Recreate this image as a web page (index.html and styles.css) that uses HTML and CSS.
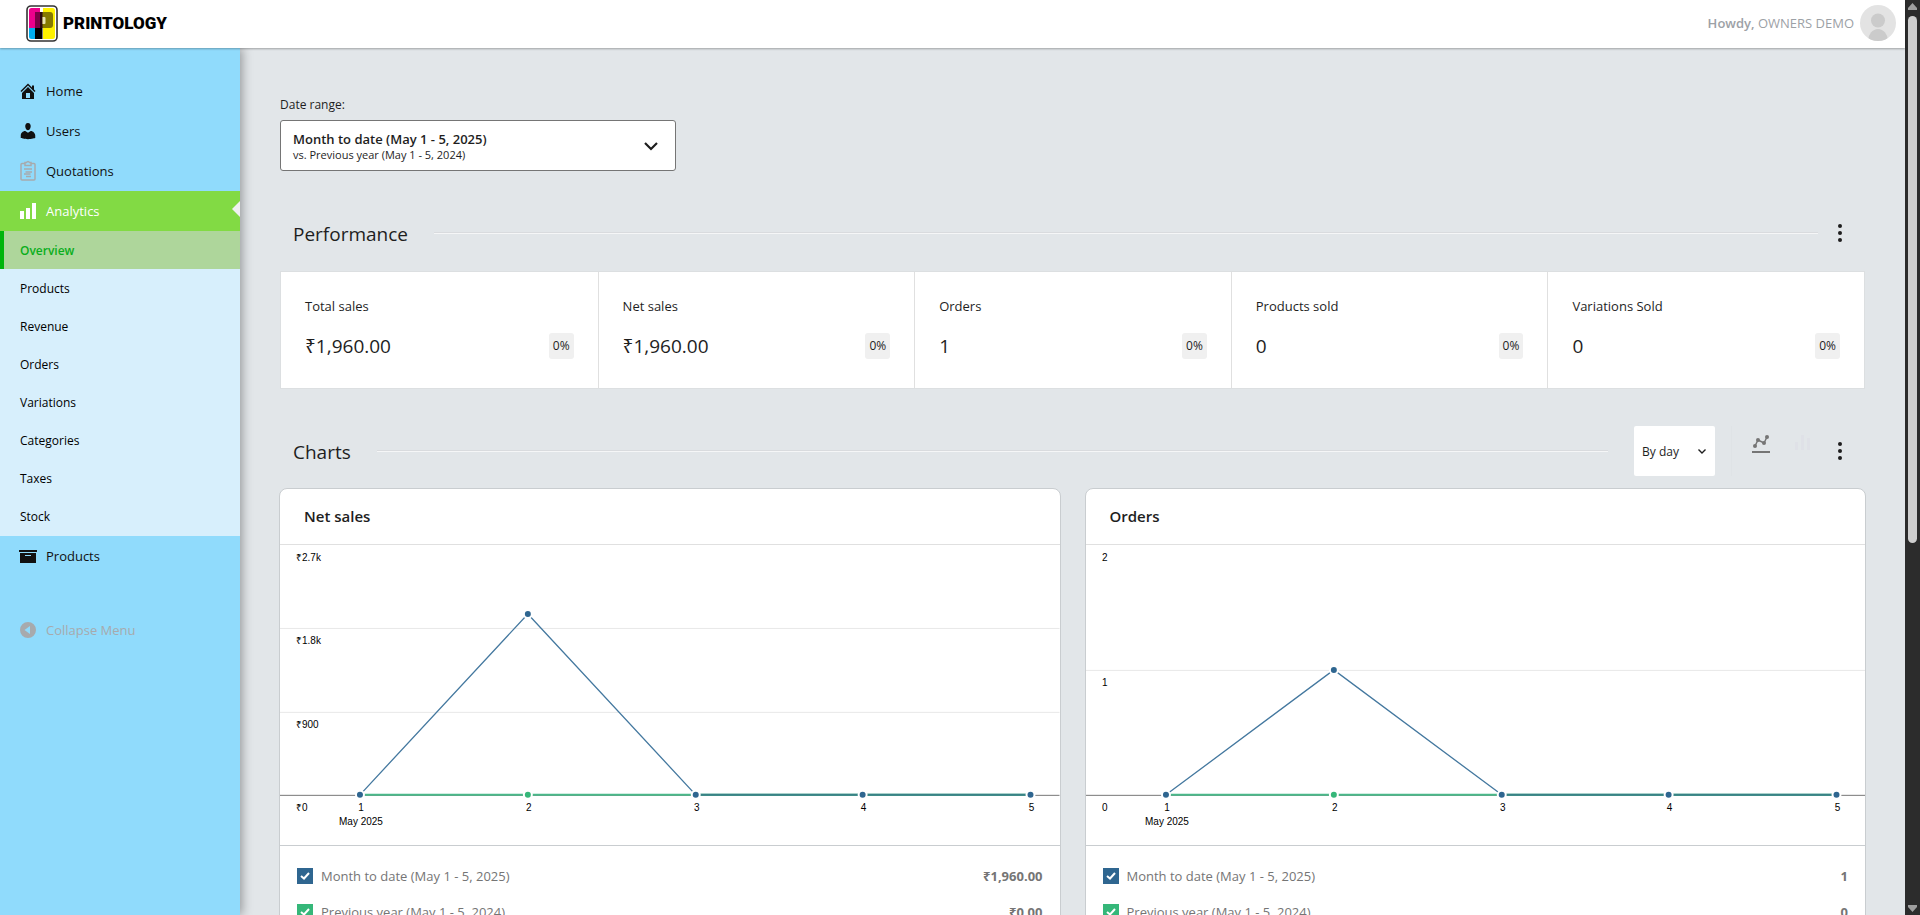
FILE: index.html
```html
<!DOCTYPE html>
<html lang="en">
<head>
<meta charset="utf-8">
<title>Analytics Overview</title>
<link rel="stylesheet" href="styles.css">
</head>
<body>
<div class="window">
  <div class="app">
    <header class="topbar">
      <a class="brand" href="#">
        <svg class="brand-mark" width="32" height="37" viewBox="0 0 32 37" aria-hidden="true">
          <rect x="1" y="1" width="30" height="35" rx="4" fill="#fff" stroke="#333" stroke-width="1.6"/>
          <path d="M5.500 3H14v20H3V5.500A2.500 2.500 0 0 1 5.500 3z" fill="#ec008c"/>
          <path d="M3 23h9v11H5.500A2.500 2.500 0 0 1 3 31.500z" fill="#00aeef"/>
          <path d="M17 3h9.500A2.500 2.500 0 0 1 29 5.500v26a2.500 2.500 0 0 1-2.500 2.500H17z" fill="#fff200"/>
          <path d="M9 7h7v16H9z" fill="#7a0046"/>
          <path d="M16 7h8q3 0 3 3v10q0 3-3 3h-8z" fill="#857a00"/>
          <path d="M9 23h7.500v11H9z" fill="#000"/>
          <path d="M14 7h2.500v16H14z" fill="#2a0a10"/>
          <path d="M16.500 12h2q1 0 1 1v5q0 1-1 1h-2z" fill="#e8e4b0"/>
        </svg>
        <span class="brand-name">PRINTOLOGY</span>
      </a>
      <a class="account" href="#"><span><b>Howdy,</b> OWNERS DEMO</span>
        <svg width="36" height="36" viewBox="0 0 36 36" aria-hidden="true"><defs><clipPath id="av"><circle cx="18" cy="18" r="18"/></clipPath></defs><g clip-path="url(#av)"><rect width="36" height="36" fill="#e3e3e3"/><circle cx="18" cy="15.500" r="7" fill="#cbcbcb"/><ellipse cx="18" cy="36" rx="10" ry="12" fill="#cbcbcb"/></g></svg>
      </a>
    </header>
    <div class="body">
      <nav class="sidebar">
        <a class="item" href="#"><svg viewBox="0 0 20 20" aria-hidden="true"><path d="M16 8.500l1.530 1.530-1.060 1.060L10 4.600l-6.470 6.490-1.060-1.060L10 2.500l4 4v-2h2v4zm-6-2.460l6 5.990V18H4v-5.970zM12 17v-5H8v5h4z"/></svg>Home</a>
        <a class="item" href="#"><svg viewBox="0 0 20 20" aria-hidden="true"><path d="M10 9.250c-2.270 0-2.730-3.440-2.730-3.440C7 4.020 7.820 2 9.970 2c2.160 0 2.980 2.020 2.710 3.810 0 0-.410 3.440-2.680 3.440zm0 2.570L12.720 10c2.390 0 4.520 2.330 4.520 4.530v2.490s-3.650 1.130-7.240 1.130c-3.650 0-7.240-1.130-7.240-1.130v-2.490c0-2.250 1.940-4.480 4.470-4.480z"/></svg>Users</a>
        <a class="item item-quote" href="#"><svg viewBox="0 0 20 20" aria-hidden="true"><path d="M6.500 2.500H4Q3 2.500 3 3.500V18q0 1 1 1h12q1 0 1-1V3.500q0-1-1-1h-2.500M7 1.500h1.500Q9 .4 10 .4t1.500 1.100H13V4.500H7zM6 8h8M7.500 11H14M6 13h6.500M8 15.500h5" fill="none" stroke="currentColor" stroke-width="1.500"/></svg>Quotations</a>
        <a class="item item-active" href="#"><svg viewBox="0 0 20 20" aria-hidden="true"><path d="M18 18V2h-4v16h4zm-6 0V7H8v11h4zm-6 0v-8H2v8h4z"/></svg>Analytics</a>
        <div class="submenu">
          <a class="current" href="#">Overview</a>
          <a href="#">Products</a>
          <a href="#">Revenue</a>
          <a href="#">Orders</a>
          <a href="#">Variations</a>
          <a href="#">Categories</a>
          <a href="#">Taxes</a>
          <a href="#">Stock</a>
        </div>
        <a class="item" href="#"><svg viewBox="0 0 20 20" aria-hidden="true"><path d="M19 4v2H1V4h18zM2 7h16v10H2V7zm11 3V9H7v1h6z"/></svg>Products</a>
        <button class="item collapse" type="button"><svg viewBox="0 0 20 20" aria-hidden="true"><path fill-rule="evenodd" d="M10 2a8 8 0 1 0 0 16 8 8 0 0 0 0-16zM12 6v8L6.500 10z"/></svg>Collapse Menu</button>
      </nav>
      <main class="content">
        <div class="range-label" id="range-label">Date range:</div>
        <button class="range" type="button" aria-describedby="range-label">
          <span class="range-text"><strong>Month to date (May 1 - 5, 2025)</strong><span>vs. Previous year (May 1 - 5, 2024)</span></span>
          <svg width="14" height="9" viewBox="0 0 14 9" aria-hidden="true"><path d="M1 1l6 6 6-6" fill="none" stroke="#1e1e1e" stroke-width="2.200"/></svg>
        </button>

        <div class="section-head">
          <h2>Performance</h2><hr>
          <button class="dots" type="button" aria-label="Performance options"><svg width="4" height="18" viewBox="0 0 4 18"><circle cx="2" cy="2" r="2"/><circle cx="2" cy="9" r="2"/><circle cx="2" cy="16" r="2"/></svg></button>
        </div>
        <div class="tiles">
          <a class="tile" href="#"><span>Total sales</span><span class="tile-row"><b>₹1,960.00</b><i>0%</i></span></a>
          <a class="tile" href="#"><span>Net sales</span><span class="tile-row"><b>₹1,960.00</b><i>0%</i></span></a>
          <a class="tile" href="#"><span>Orders</span><span class="tile-row"><b>1</b><i>0%</i></span></a>
          <a class="tile" href="#"><span>Products sold</span><span class="tile-row"><b>0</b><i>0%</i></span></a>
          <a class="tile" href="#"><span>Variations Sold</span><span class="tile-row"><b>0</b><i>0%</i></span></a>
        </div>

        <div class="section-head charts-head">
          <h2>Charts</h2><hr>
          <select class="interval" aria-label="Interval"><option>By day</option></select>
          <div class="chart-types">
            <button class="type-line" type="button" aria-label="Line chart"><svg width="18" height="20" viewBox="0 0 18 20"><path d="M3 12L6 6l6 3 3-6" fill="none" stroke="#757575" stroke-width="1.500"/><g fill="#757575"><circle cx="3" cy="12" r="2"/><circle cx="6" cy="6" r="2"/><circle cx="12" cy="9" r="2"/><circle cx="15" cy="3" r="2"/><path d="M0 17h18v2H0z"/></g></svg></button>
            <button class="type-bar" type="button" aria-label="Bar chart"><svg width="18" height="20" viewBox="0 0 18 20"><path d="M1 8h3v8H1zM7 1h3v15H7zM13 4h3v12h-3z" fill="#dfe1e7"/></svg></button>
          </div>
          <button class="dots" type="button" aria-label="Chart options"><svg width="4" height="18" viewBox="0 0 4 18"><circle cx="2" cy="2" r="2"/><circle cx="2" cy="9" r="2"/><circle cx="2" cy="16" r="2"/></svg></button>
        </div>
        <div class="cards">
          <section class="card">
            <h3>Net sales</h3>
            <svg class="chart" viewBox="0 0 780 300" role="img" aria-label="Net sales by day">
              <path class="grid" d="M0 83.500H780M0 167.500H780"/>
              <path class="axis" d="M0 250.500H780"/>
              <path class="previous" d="M80 250H751"/>
              <path class="present" d="M80 250L248 69L416 250"/>
              <path class="overlap" d="M416 250H751"/>
              <g class="points"><circle cx="80" cy="250" r="3"/><circle cx="248" cy="69" r="3"/><circle class="prev" cx="248" cy="250" r="3"/><circle cx="416" cy="250" r="3"/><circle cx="583" cy="250" r="3"/><circle cx="751" cy="250" r="3"/></g>
              <g><text x="16" y="16">₹2.7k</text><text x="16" y="99">₹1.8k</text><text x="16" y="183">₹900</text><text x="16" y="266">₹0</text></g>
              <g class="xlabels"><text x="81" y="266">1</text><text x="81" y="280">May 2025</text><text x="249" y="266">2</text><text x="417" y="266">3</text><text x="584" y="266">4</text><text x="752" y="266">5</text></g>
            </svg>
            <div class="legend">
              <label><input type="checkbox" checked><span>Month to date (May 1 - 5, 2025)</span><b>₹1,960.00</b></label>
              <label><input class="green" type="checkbox" checked><span>Previous year (May 1 - 5, 2024)</span><b>₹0.00</b></label>
            </div>
          </section>
          <section class="card">
            <h3>Orders</h3>
            <svg class="chart" viewBox="0 0 780 300" role="img" aria-label="Orders by day">
              <path class="grid" d="M0 125.500H780"/>
              <path class="axis" d="M0 250.500H780"/>
              <path class="previous" d="M80 250H751"/>
              <path class="present" d="M80 250L248 125L416 250"/>
              <path class="overlap" d="M416 250H751"/>
              <g class="points"><circle cx="80" cy="250" r="3"/><circle cx="248" cy="125" r="3"/><circle class="prev" cx="248" cy="250" r="3"/><circle cx="416" cy="250" r="3"/><circle cx="583" cy="250" r="3"/><circle cx="751" cy="250" r="3"/></g>
              <g><text x="16" y="16">2</text><text x="16" y="141">1</text><text x="16" y="266">0</text></g>
              <g class="xlabels"><text x="81" y="266">1</text><text x="81" y="280">May 2025</text><text x="249" y="266">2</text><text x="417" y="266">3</text><text x="584" y="266">4</text><text x="752" y="266">5</text></g>
            </svg>
            <div class="legend">
              <label><input type="checkbox" checked><span>Month to date (May 1 - 5, 2025)</span><b>1</b></label>
              <label><input class="green" type="checkbox" checked><span>Previous year (May 1 - 5, 2024)</span><b>0</b></label>
            </div>
          </section>
        </div>
      </main>
    </div>
  </div>
  <div class="scrollbar" aria-hidden="true">
    <svg width="9" height="7" viewBox="0 0 9 7"><path d="M4.500 0L9 5v2H0V5z"/></svg>
    <div class="thumb"></div>
    <svg width="9" height="7" viewBox="0 0 9 7"><path d="M4.500 7L9 2V0H0v2z"/></svg>
  </div>
</div>
</body>
</html>
```
FILE: styles.css
```css
* { box-sizing: border-box; }
body { margin: 0; font-family: "Open Sans", "Noto Sans", sans-serif; font-size: 12px; color: #1e1e1e; }
a { color: inherit; text-decoration: none; }
button { font: inherit; color: inherit; background: none; border: 0; padding: 0; text-align: left; }
h2, h3 { margin: 0; font-weight: 400; }

.window { display: flex; height: 100vh; overflow: hidden; }
.app { flex: 1; min-width: 0; display: flex; flex-direction: column; }

.topbar { display: flex; justify-content: space-between; align-items: center; flex: none; height: 48px; padding: 0 9px 2px 26px; background: #fff; box-shadow: 0 1px 2px rgba(0, 0, 0, .3); position: relative; z-index: 2; }
.brand { display: flex; align-items: center; gap: 5px; }
.brand-name { font-family: Roboto, sans-serif; font-weight: 900; font-size: 17px; color: #000; }
.account { display: flex; align-items: center; gap: 6px; font-size: 13px; color: #9ca1a6; }
.account b { font-weight: 600; }

.body { flex: 1; min-height: 0; display: flex; background: #e2e6e9; }
.sidebar { flex: none; width: 240px; padding-top: 23px; background: #90dbfc; box-shadow: 2px 0 10px rgba(0, 0, 0, .35); }
.item { display: flex; align-items: center; gap: 8px; width: 100%; height: 40px; padding: 0 18px; font-size: 13px; color: #111; position: relative; }
.item svg { width: 20px; height: 20px; fill: currentColor; overflow: visible; }
.item-quote svg { color: #a7aaad; }
.item-active { background: #82da44; color: #fff; }
.item-active::after { content: ""; position: absolute; right: 0; top: 10px; border: 8px solid transparent; border-left: 0; border-right-color: #f0f0f1; }
.submenu { padding-bottom: 1px; background: #d7effc; color: #000; }
.submenu a { display: flex; align-items: center; height: 38px; padding-left: 20px; }
.submenu .current { padding-left: 16px; border-left: 4px solid #00b50b; background: #aed69b; color: #0aae1c; font-weight: 600; }
.collapse { margin-top: 34px; color: #a7aaad; }

.content { flex: 1; min-width: 0; padding: 48px 40px 0; overflow: hidden; }
.range-label { line-height: 18px; margin-bottom: 6px; }
.range { display: flex; align-items: center; justify-content: space-between; width: 25%; height: 51px; padding: 2px 17px 0 12px; background: #fff; border: 1px solid #757575; border-radius: 3px; }
.range-text { display: flex; flex-direction: column; line-height: 16px; font-size: 11px; }
.range strong { font-size: 13px; font-weight: 600; }

.section-head { display: flex; align-items: center; height: 50px; margin-top: 37px; padding: 0 23px 0 13px; }
.section-head h2 { padding-top: 2px; font-size: 19px; line-height: 28px; }
.section-head hr { flex: 1; margin: 0 20px 0 26px; height: 2px; border: 0; border-top: 1px solid #d9dbde; background: #f5f6f7; }
.section-head.charts-head hr { margin-right: 26px; }
.dots { display: flex; width: 4px; }
.dots svg { fill: #1e1e1e; }

.tiles { display: grid; grid-template-columns: repeat(5, 1fr); margin-top: 13px; border: 1px solid #dcdfe1; background: #fff; }
.tile { padding: 24px; height: 116px; border-left: 1px solid #e0e0e0; font-size: 13px; line-height: 20px; }
.tile:first-child { border-left: 0; }
.tile-row { display: flex; align-items: center; justify-content: space-between; margin-top: 16px; }
.tile b { font-size: 19px; font-weight: 400; line-height: 28px; }
.tile i { font-style: normal; font-size: 12px; line-height: 26px; padding: 0 4px; border-radius: 3px; background: #f0f0f0; }

.charts-head { margin-bottom: 12px; }
.interval { appearance: none; width: 81px; height: 50px; padding: 0 8px; border: 0; border-radius: 2px; font: inherit; color: #1e1e1e; background: #fff url("data:image/svg+xml,%3Csvg xmlns='http://www.w3.org/2000/svg' width='8' height='5'%3E%3Cpath d='M.5 .5L4 4 7.500 .5' fill='none' stroke='%231e1e1e' stroke-width='1.400'/%3E%3C/svg%3E") no-repeat right 9px center; }
.chart-types { display: flex; gap: 24px; height: 50px; margin: 0 26px 0 16px; padding: 8px 0 0 20px; border-left: 1px solid #dfe3e6; }
.chart-types button { display: block; width: 18px; height: 20px; }

.cards { display: grid; grid-template-columns: 1fr 1fr; gap: 24px; margin: 0 -1px; }
.card { background: #fff; border: 1px solid #c9cdd0; border-radius: 8px; overflow: hidden; }
.card h3 { height: 56px; padding: 0 24px; line-height: 54px; font-size: 15px; font-weight: 600; border-bottom: 1px solid #e0e0e0; }
.chart { display: block; width: 100%; height: auto; font-family: "Liberation Sans", Arial, sans-serif; font-size: 10px; }
.grid, .axis, .previous, .present, .overlap { fill: none; stroke-width: 1; }
.grid { stroke: #e8e8e8; }
.axis { stroke: #757575; }
.previous { stroke: #4ab98a; stroke-width: 2; }
.present { stroke: #44789f; stroke-width: 1.3; }
.overlap { stroke: #398287; stroke-width: 2; }
.points { fill: #2f6690; stroke: #fff; stroke-width: 4; paint-order: stroke; }
.points .prev { fill: #35b779; }
.xlabels { text-anchor: middle; }
.legend { padding: 12px 17px; border-top: 1px solid #c9cdd0; color: #757575; font-size: 13px; }
.legend label { display: flex; align-items: center; height: 36px; gap: 8px; }
.legend b { margin-left: auto; font-weight: 700; }
.legend input { appearance: none; width: 16px; height: 16px; margin: 0; background: #2f6690 url("data:image/svg+xml,%3Csvg xmlns='http://www.w3.org/2000/svg' width='10' height='8'%3E%3Cpath d='M1 4l3 2.500L9 1' fill='none' stroke='white' stroke-width='2'/%3E%3C/svg%3E") no-repeat center; }
.legend .green { background-color: #35b779; }

.scrollbar { flex: none; width: 15px; display: flex; flex-direction: column; align-items: center; padding: 3px 0; background: #2c2c2c; }
.scrollbar svg { fill: #9f9f9f; }
.thumb { flex: none; width: 9px; height: 58%; margin: 6px 0 auto; border-radius: 5px; background: #cfcfcf; }
```
